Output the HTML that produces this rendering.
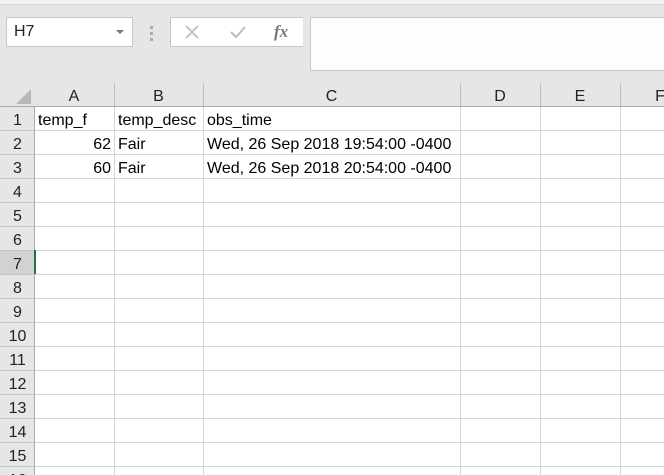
<!DOCTYPE html><html style="overflow:hidden;height:475px"><head><style>
body{margin:0;width:664px;height:475px;overflow:hidden;background:#e6e6e6;font-family:"Liberation Sans",sans-serif;position:relative}
.a{position:absolute;box-sizing:border-box}
.cell{position:absolute;font-size:16px;color:#000;line-height:24px;padding-top:2px;box-sizing:border-box;height:24px}
</style></head><body>
<div class="a" style="left:0;top:0;width:664px;height:5px;background:#f3f3f3;border-bottom:1px solid #d4d4d4"></div>
<div class="a" style="left:6px;top:17px;width:127px;height:30px;background:#fff;border:1px solid #c6c6c6;font-size:16px;padding:5px 0 0 7px;color:#222">H7</div>
<div class="a" style="left:116px;top:30px;width:0;height:0;border-left:4px solid transparent;border-right:4px solid transparent;border-top:4px solid #777"></div>
<div class="a" style="left:150px;top:26px;width:3px;height:3px;background:#aaa;box-shadow:0 6px 0 #aaa,0 12px 0 #aaa"></div>
<div class="a" style="left:170px;top:17px;width:137px;height:30px;background:#fff;border:1px solid #c6c6c6"></div>
<div class="a" style="left:303px;top:17px;width:7px;height:30px;background:#e6e6e6"></div>
<svg class="a" style="left:184px;top:24px" width="16" height="16"><path d="M2 2L14 14M14 2L2 14" stroke="#bbb" stroke-width="1.6"/></svg>
<svg class="a" style="left:229px;top:24px" width="18" height="16"><path d="M2 8L7 13L16 3" stroke="#bbb" stroke-width="2" fill="none"/></svg>
<div class="a" style="left:274px;top:22px;font:italic bold 17px 'Liberation Serif',serif;color:#777">fx</div>
<div class="a" style="left:310px;top:17px;width:360px;height:54px;background:#fdfdfd;border:1px solid #c6c6c6"></div>
<div class="a" style="left:0;top:83px;width:664px;height:24px;background:#e6e6e6;border-bottom:1px solid #ababab"></div>
<svg class="a" style="left:14px;top:88px" width="18" height="16"><path d="M17 1L17 16L2 16Z" fill="#b8b8b8"/></svg>
<div class="a" style="left:0;top:107px;width:35px;height:368px;background:#e6e6e6;border-right:1px solid #ababab"></div>
<div class="a" style="left:35px;top:107px;width:629px;height:368px;background:#fff;
background-image:repeating-linear-gradient(to bottom,transparent 0,transparent 23px,#d4d4d4 23px,#d4d4d4 24px)"></div>
<div id="g"></div>
<script>
var h='';var cols=[[34,114,'A'],[114,203,'B'],[203,460,'C'],[460,540,'D'],[540,620,'E'],[620,700,'F']];
cols.forEach(function(c){h+='<div class="a" style="left:'+(c[1])+'px;top:107px;width:1px;height:368px;background:#d4d4d4"></div>';
h+='<div class="a" style="left:'+c[1]+'px;top:83px;width:1px;height:23px;background:#c0c0c0"></div>';
h+='<div class="cell" style="left:'+c[0]+'px;width:'+(c[1]-c[0])+'px;top:83px;text-align:center;color:#222">'+c[2]+'</div>';});
for(var r=1;r<=16;r++){var y=107+(r-1)*24;h+='<div class="cell" style="left:0;width:35px;top:'+y+'px;text-align:center;color:#222;'+(r==7?'background:#d2d2d2;':'')+'">'+r+'</div>';
h+='<div class="a" style="left:0;top:'+(y+23)+'px;width:35px;height:1px;background:#c6c6c6"></div>';}
h+='<div class="a" style="left:34px;top:250px;width:2px;height:24px;background:#217346"></div>';
var d=[[1,38,'temp_f'],[1,118,'temp_desc'],[1,207,'obs_time'],[2,118,'Fair'],[2,207,'Wed, 26 Sep 2018 19:54:00 -0400'],[3,118,'Fair'],[3,207,'Wed, 26 Sep 2018 20:54:00 -0400']];
d.forEach(function(x){h+='<div class="cell" style="left:'+x[1]+'px;top:'+(107+(x[0]-1)*24)+'px">'+x[2]+'</div>';});
h+='<div class="cell" style="left:34px;width:77px;text-align:right;top:131px">62</div><div class="cell" style="left:34px;width:77px;text-align:right;top:155px">60</div>';
document.getElementById('g').innerHTML=h;
</script>
</body></html>
